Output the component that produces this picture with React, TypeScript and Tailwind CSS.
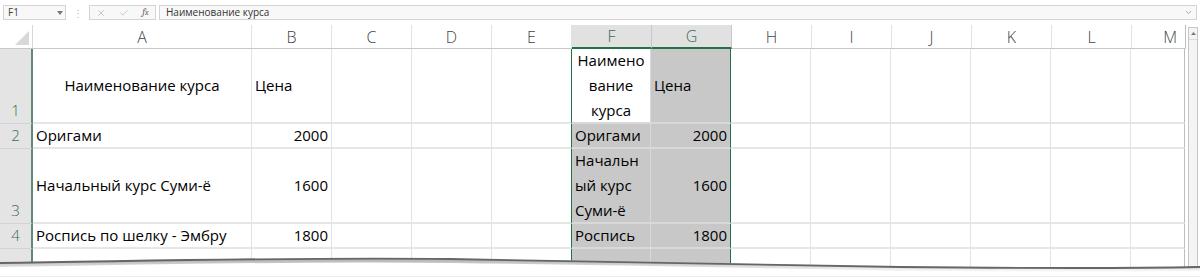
import React from 'react';
import { X, Check, ChevronDown } from 'lucide-react';

const cellFont = { fontFamily: '"Open Sans", "Liberation Sans", sans-serif' };

type Col = { key: string; w: string; sel?: boolean };

const cols: Col[] = [
  { key: 'A', w: 'w-[219px]' },
  { key: 'B', w: 'w-[80px]' },
  { key: 'C', w: 'w-[80px]' },
  { key: 'D', w: 'w-[80px]' },
  { key: 'E', w: 'w-[80px]' },
  { key: 'F', w: 'w-[80px]', sel: true },
  { key: 'G', w: 'w-[80px]', sel: true },
  { key: 'H', w: 'w-[80px]' },
  { key: 'I', w: 'w-[80px]' },
  { key: 'J', w: 'w-[80px]' },
  { key: 'K', w: 'w-[80px]' },
  { key: 'L', w: 'w-[80px]' },
  { key: 'M', w: 'w-[54px]' },
];

type Cell = { text?: React.ReactNode; align?: 'left' | 'right' | 'center' };

const rows: { num: string; h: string; cells: Record<string, Cell> }[] = [
  {
    num: '1',
    h: 'h-[75px]',
    cells: {
      A: { text: 'Наименование курса', align: 'center' },
      B: { text: 'Цена' },
      F: {
        text: (
          <>
            Наимено<br />вание<br />курса
          </>
        ),
        align: 'center',
      },
      G: { text: 'Цена' },
    },
  },
  {
    num: '2',
    h: 'h-[25px]',
    cells: {
      A: { text: 'Оригами' },
      B: { text: '2000', align: 'right' },
      F: { text: 'Оригами' },
      G: { text: '2000', align: 'right' },
    },
  },
  {
    num: '3',
    h: 'h-[75px]',
    cells: {
      A: { text: 'Начальный курс Суми-ё' },
      B: { text: '1600', align: 'right' },
      F: {
        text: (
          <>
            Начальн<br />ый курс<br />Суми-ё
          </>
        ),
      },
      G: { text: '1600', align: 'right' },
    },
  },
  {
    num: '4',
    h: 'h-[25px]',
    cells: {
      A: { text: 'Роспись по шелку - Эмбру' },
      B: { text: '1800', align: 'right' },
      F: { text: 'Роспись' },
      G: { text: '1800', align: 'right' },
    },
  },
  // row 5 is cut off by the torn edge, its number never shows
  { num: '', h: 'h-[25px]', cells: {} },
];

const alignClass = {
  left: 'justify-start text-left',
  right: 'justify-end text-right',
  center: 'justify-center text-center',
};

export default function App() {
  return (
    <div className="relative w-[1200px] h-[278px] overflow-hidden bg-white" style={cellFont}>
      {/* formula bar */}
      <div className="flex items-center h-[25px] pl-[3px] pr-[3px] gap-[3px] text-[10px] text-[#444]">
        <div className="flex items-center justify-between w-[63px] h-[15px] border border-[#d4d4d4] bg-[#f8f8f8] pl-[4px] pr-[2px]">
          <span>F1</span>
          <svg width="6" height="4" viewBox="0 0 6 4"><path d="M0 0h6L3 4z" fill="#777" /></svg>
        </div>
        <div className="w-[17px] flex justify-center text-[#bbb] leading-none">⋮</div>
        <div className="flex items-center justify-around w-[67px] h-[15px] border border-[#d4d4d4] bg-[#f8f8f8] text-[#aaa]">
          <X size={10} strokeWidth={1.5} />
          <Check size={10} strokeWidth={1.5} />
          <span className="italic text-[#666] font-serif text-[10px]">f<span className="text-[8px]">x</span></span>
        </div>
        <div className="flex-1 flex items-center justify-between h-[15px] border border-[#d4d4d4] bg-[#f8f8f8] pl-[6px] pr-[3px] text-[#333]">
          <span>Наименование курса</span>
          <ChevronDown size={9} className="text-[#888]" />
        </div>
      </div>

      <div className="flex">
        <div className="flex flex-col">
          {/* column headers */}
          <div className="flex h-[24px] border-b border-[#c8c8c8]">
            <div className="w-[33px] flex items-end justify-end p-[3px] border-r border-[#d8d8d8]">
              <svg width="14" height="14" viewBox="0 0 14 14"><path d="M14 0V14H0z" fill="#d8d8d8" /></svg>
            </div>
            {cols.map((c) => (
              <div
                key={c.key}
                className={`${c.w} flex items-center justify-center text-[16px] font-light border-r ${
                  c.sel
                    ? 'bg-[#e1e1e1] text-[#3a6b56] border-[#c8c8c8] border-b-2 border-b-[#217346] -mb-px'
                    : 'text-[#444] border-[#e2e2e2]'
                } ${c.key === 'M' ? 'justify-end pr-[8px] border-r-[#bdbdbd]' : ''}`}
              >
                {c.key}
              </div>
            ))}
          </div>

          {/* rows */}
          {rows.map((r, ri) => (
            <div key={ri} className={`flex ${r.h}`}>
              <div className="w-[33px] flex items-end justify-center pb-[2px] bg-[#e4e4e4] text-[#3a6b56] text-[15px] font-light border-r-2 border-r-[#5f8a76] border-b border-b-[#d2d2d2]">
                {r.num}
              </div>
              {cols.map((c) => {
                const cell = r.cells[c.key];
                const active = c.key === 'F' && ri === 0;
                const bg = c.sel && !active ? 'bg-[#c8c8c8]' : '';
                const sideBorder =
                  c.key === 'F'
                    ? '-ml-px border-l border-l-[#217346] border-r border-r-[#d9d9d9]'
                    : c.key === 'G'
                    ? 'border-r border-r-[#217346]'
                    : c.key === 'M'
                    ? 'border-r border-r-[#bdbdbd]'
                    : 'border-r border-r-[#e2e2e2]';
                const bottomBorder = c.sel
                  ? 'border-b-2 border-b-[#d9d9d9]'
                  : 'border-b-2 border-b-[#e6e6e6]';
                return (
                  <div
                    key={c.key}
                    className={`${c.w} ${bg} ${sideBorder} ${bottomBorder} flex items-center px-[3px] ${
                      cell ? alignClass[cell.align ?? 'left'] : ''
                    } text-[15px] leading-[25px] text-black`}
                  >
                    {cell?.text}
                  </div>
                );
              })}
            </div>
          ))}
        </div>

        {/* scrollbar */}
        <div className="ml-[2px] mt-[2px] w-[10px] h-[240px] border border-[#c6c6c6] bg-[#f4f4f4] flex flex-col">
          <div className="h-[12px] flex items-center justify-center border-b border-[#dcdcdc]">
            <svg width="5" height="3" viewBox="0 0 5 3"><path d="M0 3h5L2.5 0z" fill="#777" /></svg>
          </div>
        </div>
      </div>

      {/* torn page edge */}
      <svg className="absolute left-0 bottom-0" width="1200" height="30" viewBox="0 0 1200 30">
        <defs>
          <linearGradient id="sh" x1="0" y1="0" x2="0" y2="1">
            <stop offset="0" stopColor="#8a8a8a" />
            <stop offset="1" stopColor="#ffffff" />
          </linearGradient>
        </defs>
        <path
          d="M0 15 C150 13 300 9 450 11 C600 13 750 16 900 19 C1000 20 1100 21 1200 19 L1200 30 L0 30 Z"
          fill="#fff"
        />
        <path
          d="M0 15 C150 13 300 9 450 11 C600 13 750 16 900 19 C1000 20 1100 21 1200 19 L1200 23 C1100 25 1000 24 900 23 C750 20 600 17 450 15 C300 13 150 17 0 19 Z"
          fill="url(#sh)"
          opacity="0.7"
        />
        <path
          d="M0 15 C150 13 300 9 450 11 C600 13 750 16 900 19 C1000 20 1100 21 1200 19"
          fill="none"
          stroke="#666"
          strokeWidth="1.8"
        />
        <line x1="0" y1="28.5" x2="1200" y2="28.5" stroke="#ececec" />
      </svg>
    </div>
  );
}
